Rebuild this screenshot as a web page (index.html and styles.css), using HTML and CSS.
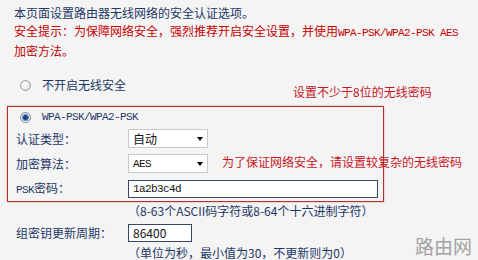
FILE: index.html
```html
<!DOCTYPE html>
<html lang="zh-CN">
<head>
    <meta charset="UTF-8">
    <meta name="viewport" content="width=device-width, initial-scale=1.0">
    <title>无线网络安全设置</title>
    <link rel="stylesheet" href="styles.css">
</head>
<body>
    <div class="page">
        <p class="intro">本页面设置路由器无线网络的安全认证选项。</p>
        <p class="warn">安全提示：为保障网络安全，强烈推荐开启安全设置，并使用<span class="mono">WPA-PSK/WPA2-PSK AES</span><br>加密方法。</p>

        <div class="radio-row">
            <span class="radio"></span>
            <span>不开启无线安全</span>
        </div>

        <div class="wpa-box">
            <div class="radio-row in-box">
                <span class="radio checked"></span>
                <span class="mono">WPA-PSK/WPA2-PSK</span>
            </div>
            <div class="field">
                <label>认证类型：</label>
                <div class="select">自动</div>
            </div>
            <div class="field">
                <label>加密算法：</label>
                <div class="select"><span class="mono">AES</span></div>
            </div>
            <div class="field">
                <label><span class="mono">PSK</span>密码：</label>
                <div class="input psk"><span class="mono">1a2b3c4d</span></div>
            </div>
        </div>

        <div class="hint">（8-63个ASCII码字符或8-64个十六进制字符）</div>
        <div class="field outside">
            <label>组密钥更新周期：</label>
            <div class="input short">86400</div>
        </div>
        <div class="hint last">（单位为秒，最小值为30，不更新则为0）</div>

        <!-- annotations drawn over the form -->
        <div class="note note-len">设置不少于8位的无线密码</div>
        <div class="note note-strong">为了保证网络安全，请设置较复杂的无线密码</div>
        <div class="watermark">路由网</div>
    </div>
</body>
</html>
```

FILE: styles.css
```css
* {
    box-sizing: border-box;
}

:root {
    --navy: #1d3766;
    --red: #c40000;
    --note-red: #c8141e;
    --bg: #f4f4f4;
}

body {
    margin: 0;
    background-color: var(--bg);
    color: var(--navy);
    font: 12px/18px "Noto Sans CJK SC", sans-serif;
}

.page {
    position: relative;
    padding: 4px 7px 0;
}

.intro, .warn {
    margin: 0;
    padding-left: 7px;
}

.warn {
    color: var(--red);
}

.mono {
    font-family: "Liberation Mono", "Noto Sans CJK SC", monospace;
    font-size: 11px;
    letter-spacing: -0.6px;
}

/* Radio rows */
.radio-row {
    display: flex;
    align-items: center;
    gap: 11px;
    height: 18px;
    margin-top: 16px;
    padding-left: 13px;
}

.radio-row.in-box {
    margin-top: 0;
    padding-left: 4px;
}

.radio {
    width: 11px;
    height: 11px;
    border-radius: 50%;
    border: 1px solid #9a9a9a;
    background: radial-gradient(circle at 40% 40%, #ffffff, #d6d6d6);
}

.radio.checked {
    border-color: #7a8aa0;
    background: radial-gradient(circle, #1f3f7a 0 2px, #6f95c8 2.6px 3.4px, #eef0f3 3.8px);
}

/* WPA box */
.wpa-box {
    width: 377px;
    margin-top: 12px;
    padding: 1px 0 0 8px;
    border: 1px solid #b5302c;
    box-shadow: 0 0 2px rgba(210, 60, 60, 0.45);
}

.field {
    display: flex;
    align-items: center;
    height: 25px;
}

.field label {
    width: 112px;
}

.field.outside {
    height: 24px;
    margin-top: 1px;
    padding-left: 9px;
}

.select {
    position: relative;
    display: flex;
    align-items: center;
    width: 80px;
    height: 19px;
    padding-left: 4px;
    border: 1px solid #c9c9c9;
    background-color: #fff;
    color: #111;
}

.select::after {
    content: "";
    position: absolute;
    right: 4px;
    top: 7px;
    border-left: 3.5px solid transparent;
    border-right: 3.5px solid transparent;
    border-top: 4px solid #000;
}

.input {
    display: flex;
    align-items: center;
    height: 18px;
    padding-left: 4px;
    border: 1px solid #37466a;
    background-color: #fff;
    color: #111;
}

.input.psk {
    width: 250px;
}

.input.short {
    width: 64px;
}

.hint {
    padding-left: 121px;
}

.hint.last {
    line-height: 16px;
}

/* Overlays */
.note {
    position: absolute;
    color: var(--note-red);
}

.note-len {
    left: 293px;
    top: 83px;
}

.note-strong {
    left: 222px;
    top: 153px;
}

.watermark {
    position: absolute;
    right: 6px;
    top: 236px;
    font-size: 19px;
    line-height: 20px;
    color: #a3a3a3;
}
```
